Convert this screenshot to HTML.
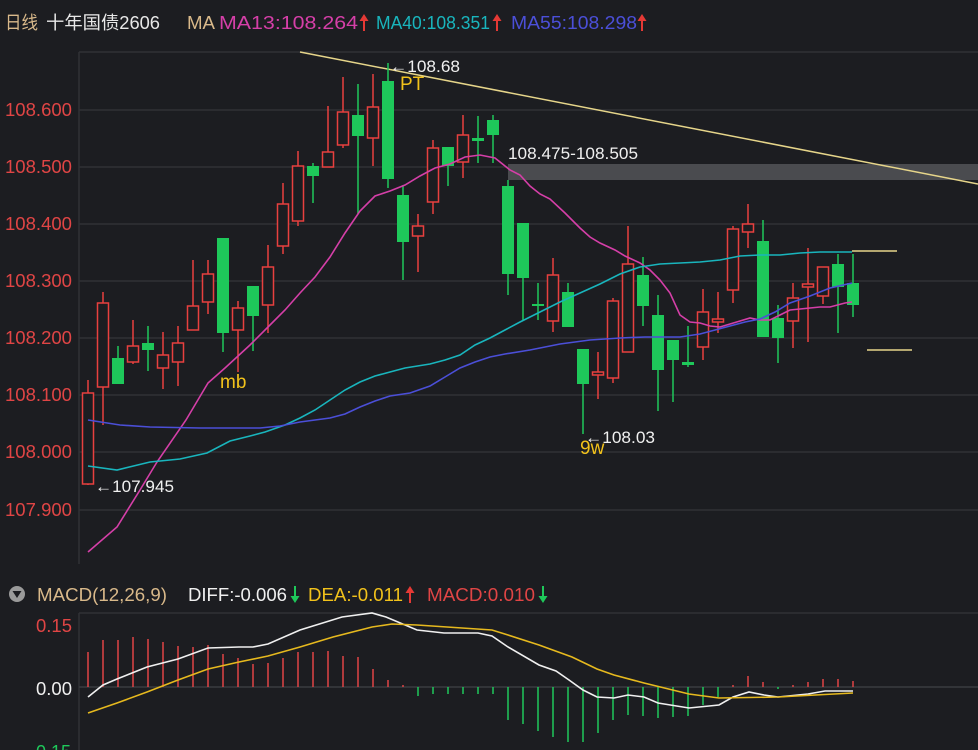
<!DOCTYPE html>
<html><head><meta charset="utf-8"><style>
html,body{margin:0;padding:0;background:#1c1d21;width:978px;height:750px;overflow:hidden}
svg{display:block}
text{font-family:"Liberation Sans","Noto Sans CJK SC",sans-serif}
</style></head><body>
<svg width="978" height="750" viewBox="0 0 978 750" xmlns="http://www.w3.org/2000/svg">
<defs>
<g id="up"><line x1="0" y1="4" x2="0" y2="17" stroke-width="2"/><path d="M-4.5 7 L0 0 L4.5 7 Z" stroke="none"/></g>
<g id="dn"><line x1="0" y1="0" x2="0" y2="13" stroke-width="2"/><path d="M-4.5 10 L0 17 L4.5 10 Z" stroke="none"/></g>
</defs>
<rect width="978" height="750" fill="#1c1d21"/>
<!-- header -->
<g font-size="18" lengthAdjust="spacingAndGlyphs">
<text x="5" y="29" fill="#d9b98a" textLength="33" lengthAdjust="spacingAndGlyphs">日线</text>
<text x="46" y="29" fill="#e8e8e8" textLength="114" lengthAdjust="spacingAndGlyphs">十年国债2606</text>
<text x="187" y="29" fill="#d9b98a" textLength="28" lengthAdjust="spacingAndGlyphs">MA</text>
<text x="219" y="29" fill="#d53fa8" textLength="139" lengthAdjust="spacingAndGlyphs">MA13:108.264</text>
<text x="376" y="29" fill="#19b5bd" textLength="114" lengthAdjust="spacingAndGlyphs">MA40:108.351</text>
<text x="511" y="29" fill="#4b4fd8" textLength="126" lengthAdjust="spacingAndGlyphs">MA55:108.298</text>
</g>
<g fill="#e53935" stroke="#e53935">
<use href="#up" x="364" y="14"/><use href="#up" x="497" y="14"/><use href="#up" x="642" y="14"/>
</g>
<!-- grid -->
<g stroke="#303236" stroke-width="1.5">
<line x1="79" y1="52" x2="978" y2="52"/>
<line x1="79" y1="52" x2="79" y2="564"/>
<line x1="79" y1="110" x2="978" y2="110"/>
<line x1="79" y1="167" x2="978" y2="167"/>
<line x1="79" y1="224" x2="978" y2="224"/>
<line x1="79" y1="281" x2="978" y2="281"/>
<line x1="79" y1="338" x2="978" y2="338"/>
<line x1="79" y1="395" x2="978" y2="395"/>
<line x1="79" y1="452" x2="978" y2="452"/>
<line x1="79" y1="510" x2="978" y2="510"/>
</g>
<g font-size="18" fill="#e04545">
<text x="5" y="116" textLength="67" lengthAdjust="spacingAndGlyphs">108.600</text><text x="5" y="173" textLength="67" lengthAdjust="spacingAndGlyphs">108.500</text><text x="5" y="230" textLength="67" lengthAdjust="spacingAndGlyphs">108.400</text>
<text x="5" y="287" textLength="67" lengthAdjust="spacingAndGlyphs">108.300</text><text x="5" y="344" textLength="67" lengthAdjust="spacingAndGlyphs">108.200</text><text x="5" y="401" textLength="67" lengthAdjust="spacingAndGlyphs">108.100</text>
<text x="5" y="458" textLength="67" lengthAdjust="spacingAndGlyphs">108.000</text><text x="5" y="516" textLength="67" lengthAdjust="spacingAndGlyphs">107.900</text>
</g>
<!-- band -->
<rect x="508" y="164" width="470" height="16" fill="#4a4b4f"/>
<line x1="300" y1="52" x2="978" y2="184" stroke="#e6d58a" stroke-width="1.5"/>
<line x1="852" y1="251" x2="897" y2="251" stroke="#e6d58a" stroke-width="1.5"/>
<line x1="867" y1="350" x2="912" y2="350" stroke="#e6d58a" stroke-width="1.5"/>
<!-- candles -->
<g stroke-width="1.5">
<g stroke="#e8403f" fill="#1c1d21">
<line x1="88" y1="380" x2="88" y2="485"/><rect x="82.5" y="393" width="11" height="91"/>
<line x1="103" y1="292" x2="103" y2="425"/><rect x="97.5" y="303" width="11" height="84"/>
<line x1="133" y1="320" x2="133" y2="364"/><rect x="127.5" y="346" width="11" height="16"/>
<line x1="163" y1="332" x2="163" y2="389"/><rect x="157.5" y="355" width="11" height="13"/>
<line x1="178" y1="326" x2="178" y2="386"/><rect x="172.5" y="343" width="11" height="19"/>
<line x1="193" y1="260" x2="193" y2="330"/><rect x="187.5" y="306" width="11" height="24"/>
<line x1="208" y1="260" x2="208" y2="314"/><rect x="202.5" y="274" width="11" height="28"/>
<line x1="238" y1="301" x2="238" y2="372"/><rect x="232.5" y="308" width="11" height="22"/>
<line x1="268" y1="245" x2="268" y2="333"/><rect x="262.5" y="267" width="11" height="38"/>
<line x1="283" y1="183" x2="283" y2="254"/><rect x="277.5" y="204" width="11" height="42"/>
<line x1="298" y1="151" x2="298" y2="226"/><rect x="292.5" y="166" width="11" height="55"/>
<line x1="328" y1="106" x2="328" y2="167"/><rect x="322.5" y="152" width="11" height="15"/>
<line x1="343" y1="77" x2="343" y2="148"/><rect x="337.5" y="112" width="11" height="33"/>
<line x1="373" y1="74" x2="373" y2="166"/><rect x="367.5" y="107" width="11" height="31"/>
<line x1="418" y1="214" x2="418" y2="272"/><rect x="412.5" y="226" width="11" height="10"/>
<line x1="433" y1="140" x2="433" y2="214"/><rect x="427.5" y="148" width="11" height="54"/>
<line x1="463" y1="115" x2="463" y2="178"/><rect x="457.5" y="135" width="11" height="27"/>
<line x1="553" y1="258" x2="553" y2="332"/><rect x="547.5" y="275" width="11" height="46"/>
<line x1="598" y1="352" x2="598" y2="399"/><rect x="592.5" y="372" width="11" height="3"/>
<line x1="613" y1="298" x2="613" y2="383"/><rect x="607.5" y="301" width="11" height="77"/>
<line x1="628" y1="226" x2="628" y2="352"/><rect x="622.5" y="264" width="11" height="88"/>
<line x1="703" y1="289" x2="703" y2="360"/><rect x="697.5" y="312" width="11" height="35"/>
<line x1="718" y1="292" x2="718" y2="333"/><rect x="712.5" y="319" width="11" height="3"/>
<line x1="733" y1="226" x2="733" y2="303"/><rect x="727.5" y="229" width="11" height="61"/>
<line x1="748" y1="204" x2="748" y2="248"/><rect x="742.5" y="224" width="11" height="8"/>
<line x1="793" y1="283" x2="793" y2="348"/><rect x="787.5" y="298" width="11" height="23"/>
<line x1="808" y1="248" x2="808" y2="342"/><rect x="802.5" y="284" width="11" height="3"/>
<line x1="823" y1="267" x2="823" y2="304"/><rect x="817.5" y="267" width="11" height="29"/>
</g>
<g stroke="#1ec85a" fill="#1ec85a">
<line x1="118" y1="346" x2="118" y2="384"/><rect x="112" y="358" width="12" height="26" stroke="none"/>
<line x1="148" y1="326" x2="148" y2="371"/><rect x="142" y="343" width="12" height="7" stroke="none"/>
<line x1="223" y1="238" x2="223" y2="352"/><rect x="217" y="238" width="12" height="95" stroke="none"/>
<line x1="253" y1="286" x2="253" y2="351"/><rect x="247" y="286" width="12" height="30" stroke="none"/>
<line x1="313" y1="163" x2="313" y2="203"/><rect x="307" y="166" width="12" height="10" stroke="none"/>
<line x1="358" y1="84" x2="358" y2="214"/><rect x="352" y="115" width="12" height="21" stroke="none"/>
<line x1="388" y1="63" x2="388" y2="188"/><rect x="382" y="81" width="12" height="98" stroke="none"/>
<line x1="403" y1="185" x2="403" y2="280"/><rect x="397" y="195" width="12" height="47" stroke="none"/>
<line x1="448" y1="147" x2="448" y2="186"/><rect x="442" y="147" width="12" height="19" stroke="none"/>
<line x1="478" y1="116" x2="478" y2="163"/><rect x="472" y="138" width="12" height="3" stroke="none"/>
<line x1="493" y1="115" x2="493" y2="163"/><rect x="487" y="120" width="12" height="15" stroke="none"/>
<line x1="508" y1="180" x2="508" y2="295"/><rect x="502" y="186" width="12" height="88" stroke="none"/>
<line x1="523" y1="223" x2="523" y2="320"/><rect x="517" y="223" width="12" height="55" stroke="none"/>
<line x1="538" y1="283" x2="538" y2="320"/><rect x="532" y="304" width="12" height="2" stroke="none"/>
<line x1="568" y1="283" x2="568" y2="327"/><rect x="562" y="292" width="12" height="35" stroke="none"/>
<line x1="583" y1="349" x2="583" y2="434"/><rect x="577" y="349" width="12" height="35" stroke="none"/>
<line x1="643" y1="257" x2="643" y2="326"/><rect x="637" y="275" width="12" height="31" stroke="none"/>
<line x1="658" y1="295" x2="658" y2="411"/><rect x="652" y="315" width="12" height="55" stroke="none"/>
<line x1="673" y1="340" x2="673" y2="402"/><rect x="667" y="340" width="12" height="20" stroke="none"/>
<line x1="688" y1="326" x2="688" y2="367"/><rect x="682" y="362" width="12" height="3" stroke="none"/>
<line x1="763" y1="220" x2="763" y2="337"/><rect x="757" y="241" width="12" height="96" stroke="none"/>
<line x1="778" y1="305" x2="778" y2="363"/><rect x="772" y="318" width="12" height="20" stroke="none"/>
<line x1="838" y1="254" x2="838" y2="333"/><rect x="832" y="264" width="12" height="23" stroke="none"/>
<line x1="853" y1="254" x2="853" y2="317"/><rect x="847" y="283" width="12" height="22" stroke="none"/>
</g>
</g>
<!-- MAs -->
<g fill="none" stroke-width="1.6">
<polyline stroke="#d53fa8" points="88,552 117,527 140,490 157,462 186,420 208,383 225,368 250,345 270,325 285,310 300,293 315,277 330,257 345,233 360,211 375,196 390,191 405,185 420,176 435,168 450,164 465,157 480,155 495,158 510,170 520,175 530,186 540,194 550,199 565,213 580,228 590,237 600,243 615,250 625,256 640,263 650,270 660,280 670,293 680,315 690,322 700,323 710,326 720,327 730,324 740,321 750,318 760,320 770,320 780,315 790,310 800,309 810,308 820,307 830,307 845,303 852,302"/>
<polyline stroke="#19b5bd" points="88,466 117,470 150,462 180,459 207,453 230,441 250,436 265,432 285,425 300,418 315,410 330,400 345,390 360,382 375,376 390,372 405,368 430,364 445,360 460,355 475,345 490,338 505,330 520,322 540,312 560,302 580,293 600,284 620,274 640,267 660,264 680,263 700,262 720,260 740,256 760,255 780,255 800,253 820,252 852,252"/>
<polyline stroke="#4b4fd8" points="88,420 120,425 150,427 200,428 260,428 280,426 300,422 330,418 345,414 360,407 375,401 390,396 410,393 430,386 445,377 460,368 475,362 490,357 505,354 530,350 560,344 590,340 620,338 645,337 680,337 700,334 715,330 730,326 745,322 760,319 775,312 790,303 810,296 830,288 852,283"/>
</g>
<!-- annotations -->
<text x="390" y="72" font-size="17" fill="#f0f0f0" textLength="70" lengthAdjust="spacingAndGlyphs">←108.68</text>
<text x="400" y="90" font-size="19" fill="#f2c21b">PT</text>
<text x="220" y="388" font-size="19" fill="#f2c21b">mb</text>
<text x="580" y="454" font-size="19" fill="#f2c21b">9w</text>
<text x="585" y="443" font-size="17" fill="#f0f0f0" textLength="70" lengthAdjust="spacingAndGlyphs">←108.03</text>
<text x="95" y="492" font-size="17" fill="#f0f0f0" textLength="79" lengthAdjust="spacingAndGlyphs">←107.945</text>
<text x="508" y="159" font-size="17" fill="#f0f0f0" textLength="130" lengthAdjust="spacingAndGlyphs">108.475-108.505</text>
<!-- MACD header -->
<circle cx="17" cy="594" r="8" fill="#9a9a9a"/>
<path d="M12.5 591 L21.5 591 L17 598 Z" fill="#1c1d21"/>
<text x="37" y="601" font-size="18" fill="#d9b98a" textLength="130" lengthAdjust="spacingAndGlyphs">MACD(12,26,9)</text>
<text x="188" y="601" font-size="18" fill="#f0f0f0" textLength="99" lengthAdjust="spacingAndGlyphs">DIFF:-0.006</text>
<text x="308" y="601" font-size="18" fill="#f2c21b" textLength="95" lengthAdjust="spacingAndGlyphs">DEA:-0.011</text>
<text x="427" y="601" font-size="18" fill="#e04545" textLength="108" lengthAdjust="spacingAndGlyphs">MACD:0.010</text>
<g fill="#1ec85a" stroke="#1ec85a"><use href="#dn" x="295" y="586"/><use href="#dn" x="543" y="586"/></g>
<g fill="#e53935" stroke="#e53935"><use href="#up" x="410" y="586"/></g>
<line x1="79" y1="613" x2="978" y2="613" stroke="#303236" stroke-width="1.5"/>
<line x1="79" y1="613" x2="79" y2="750" stroke="#303236" stroke-width="1.5"/>
<line x1="79" y1="687" x2="978" y2="687" stroke="#3a3c40" stroke-width="1.5"/>
<text x="36" y="632" font-size="18" fill="#e04545" textLength="36" lengthAdjust="spacingAndGlyphs">0.15</text>
<text x="36" y="695" font-size="18" fill="#f0f0f0" textLength="36" lengthAdjust="spacingAndGlyphs">0.00</text>
<text x="36" y="758" font-size="18" fill="#1ec85a">0.15</text>
<g stroke-width="1.5">
<g stroke="#e04545">
<line x1="88" y1="687" x2="88" y2="652"/><line x1="103" y1="687" x2="103" y2="640"/><line x1="118" y1="687" x2="118" y2="640"/><line x1="133" y1="687" x2="133" y2="637"/><line x1="148" y1="687" x2="148" y2="639"/><line x1="163" y1="687" x2="163" y2="642"/><line x1="178" y1="687" x2="178" y2="646"/><line x1="193" y1="687" x2="193" y2="647"/><line x1="208" y1="687" x2="208" y2="645"/><line x1="223" y1="687" x2="223" y2="654"/><line x1="238" y1="687" x2="238" y2="658"/><line x1="253" y1="687" x2="253" y2="664"/><line x1="268" y1="687" x2="268" y2="663"/><line x1="283" y1="687" x2="283" y2="658"/><line x1="298" y1="687" x2="298" y2="652"/><line x1="313" y1="687" x2="313" y2="652"/><line x1="328" y1="687" x2="328" y2="651"/><line x1="343" y1="687" x2="343" y2="656"/><line x1="358" y1="687" x2="358" y2="657"/><line x1="373" y1="687" x2="373" y2="669"/><line x1="388" y1="687" x2="388" y2="680"/><line x1="403" y1="687" x2="403" y2="685"/>
<line x1="733" y1="687" x2="733" y2="685"/><line x1="748" y1="687" x2="748" y2="676"/><line x1="763" y1="687" x2="763" y2="682"/><line x1="793" y1="687" x2="793" y2="685"/><line x1="808" y1="687" x2="808" y2="682"/><line x1="823" y1="687" x2="823" y2="679"/><line x1="838" y1="687" x2="838" y2="679"/><line x1="853" y1="687" x2="853" y2="681"/>
</g>
<g stroke="#1ec85a">
<line x1="418" y1="687" x2="418" y2="696"/><line x1="433" y1="687" x2="433" y2="694"/><line x1="448" y1="687" x2="448" y2="694"/><line x1="463" y1="687" x2="463" y2="694"/><line x1="478" y1="687" x2="478" y2="694"/><line x1="493" y1="687" x2="493" y2="694"/><line x1="508" y1="687" x2="508" y2="720"/><line x1="523" y1="687" x2="523" y2="724"/><line x1="538" y1="687" x2="538" y2="731"/><line x1="553" y1="687" x2="553" y2="737"/><line x1="568" y1="687" x2="568" y2="742"/><line x1="583" y1="687" x2="583" y2="742"/><line x1="598" y1="687" x2="598" y2="733"/><line x1="613" y1="687" x2="613" y2="720"/><line x1="628" y1="687" x2="628" y2="715"/><line x1="643" y1="687" x2="643" y2="716"/><line x1="658" y1="687" x2="658" y2="718"/><line x1="673" y1="687" x2="673" y2="717"/><line x1="688" y1="687" x2="688" y2="716"/><line x1="703" y1="687" x2="703" y2="705"/><line x1="718" y1="687" x2="718" y2="697"/><line x1="778" y1="687" x2="778" y2="689"/>
</g>
</g>
<g fill="none" stroke-width="1.6">
<polyline stroke="#f0f0f0" points="88,697 103,685 117,679 147,667 178,659 208,648 239,647 253,647 268,644 300,630 342,617 372,613 386,617 417,630 444,633 478,633 492,636 508,647 539,665 556,671 569,680 583,690 597,697 614,698 628,695 644,697 658,703 689,708 719,705 733,697 749,692 764,695 778,697 808,694 825,691 853,691"/>
<polyline stroke="#e6b91e" points="88,713 117,703 147,692 178,680 208,669 239,662 268,656 300,647 333,637 372,627 392,624 417,625 492,630 508,635 539,645 572,657 597,669 614,675 644,683 689,694 719,698 778,697 853,693"/>
</g>
</svg>
</body></html>
